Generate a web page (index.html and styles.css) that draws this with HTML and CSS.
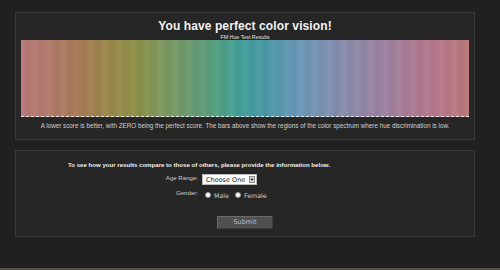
FILE: index.html
```html
<!DOCTYPE html>
<html lang="en">
<head>
<meta charset="UTF-8">
<meta name="viewport" content="width=device-width, initial-scale=1.0">
<title>FM Hue Test Results</title>
<link rel="stylesheet" href="styles.css">
</head>
<body>

<div class="page">

<section class="panel results">
<h1>You have perfect color vision!</h1>
<p class="chart-title">FM Hue Test Results</p>
<div class="spectrum"></div>
<p class="caption">A lower score is better, with ZERO being the perfect score. The bars above show the regions of the color spectrum where hue discrimination is low.</p>
</section>

<section class="panel survey">
<p class="intro">To see how your results compare to those of others, please provide the information below.</p>

<div class="row">
<span class="label">Age Range:</span>
<span class="select">Choose One <span class="arrow"><svg width="5" height="5" viewBox="0 0 5 5"><path d="M0.5 1.5h4l-2 2.5z" fill="#000"/></svg></span></span>
</div>

<div class="row">
<span class="label">Gender:</span>
<span class="radios">
<span class="radio"></span><span class="opt">Male</span>
<span class="radio"></span><span class="opt">Female</span>
</span>
</div>

<div class="actions">
<button class="submit">Submit</button>
</div>
</section>

<div class="footer-line"></div>

</div>

</body>
</html>
```

FILE: styles.css
```css
*{box-sizing:border-box}
body{margin:0;background:#202020;font-family:"Liberation Sans",Arial,sans-serif;color:#ddd}

.page{padding:12px 25px 0 15px;height:270px;overflow:hidden}

.panel{background:#262626;border:1px solid #383838;width:460px}

.results{padding:6px 4px 9px 4px;height:128px}
.results h1{margin:0;text-align:center;font-size:12px;line-height:14px;color:#f2f2f2;letter-spacing:0.1px}
.chart-title{margin:1px 0 0;text-align:center;font-size:5.3px;line-height:6px;color:#e8e8e8}

.spectrum{height:77px;margin:0 1px;border-bottom:1px dashed #e6e6e6;
background:
repeating-linear-gradient(90deg,rgba(255,255,255,.035) 0,rgba(0,0,0,.035) 7px,rgba(255,255,255,.035) 14px),
linear-gradient(90deg,#b87a7a 0%,#b07a68 7%,#a87a55 13%,#9a8a4a 20%,#8c9048 26%,#80985c 31%,#6a9a70 38%,#55a080 43%,#40a098 49%,#4a98a8 55%,#6a98b8 62%,#8090b0 69%,#9088a8 75%,#a080a0 82%,#b07890 89%,#b87888 94%,#b87878 100%)}

.caption{margin:5px 0 0;text-align:center;font-size:6.3px;line-height:8px;color:#cfcfcf}

.survey{margin-top:10px;height:87px;padding:10px 0 0}
.intro{margin:0 0 0 52px;font-size:6.1px;line-height:8px;font-weight:bold;color:#f0f0f0}

.row{display:grid;grid-template-columns:182px auto;column-gap:4px;align-items:start}
.row:nth-of-type(1){margin-top:5px}
.row + .row{margin-top:4px}
.label{text-align:right;font-size:6.1px;line-height:8px;color:#cfcfcf}

.select{display:flex;align-items:center;justify-content:space-between;width:55px;height:11px;background:#fff;
border:1px solid #bbb;padding:0 1px 0 3px;font-size:6.5px;color:#222;font-family:"DejaVu Sans",sans-serif}
.arrow{display:flex;align-items:center;justify-content:center;width:6px;height:7px;background:#ddd;border:1px solid #888}

.radios{display:flex;align-items:center;height:12px}
.radio{width:6px;height:6px;border-radius:50%;background:#fff;border:1px solid #999;margin:0 3px 0 3px}
.opt{font-size:6.3px;color:#cfcfcf;margin-right:3px;font-family:"DejaVu Sans",sans-serif}

.actions{text-align:center;margin-top:9px}
.submit{width:56px;height:13px;padding:0;background:#505050;border:1px solid #6a6a6a;border-right-color:#3a3a3a;border-bottom-color:#3a3a3a;
color:#bdbdbd;font-size:6.5px;font-family:"DejaVu Sans",sans-serif}

.footer-line{margin:31px -25px 0 -15px;height:2px;background:#55504a}
```
